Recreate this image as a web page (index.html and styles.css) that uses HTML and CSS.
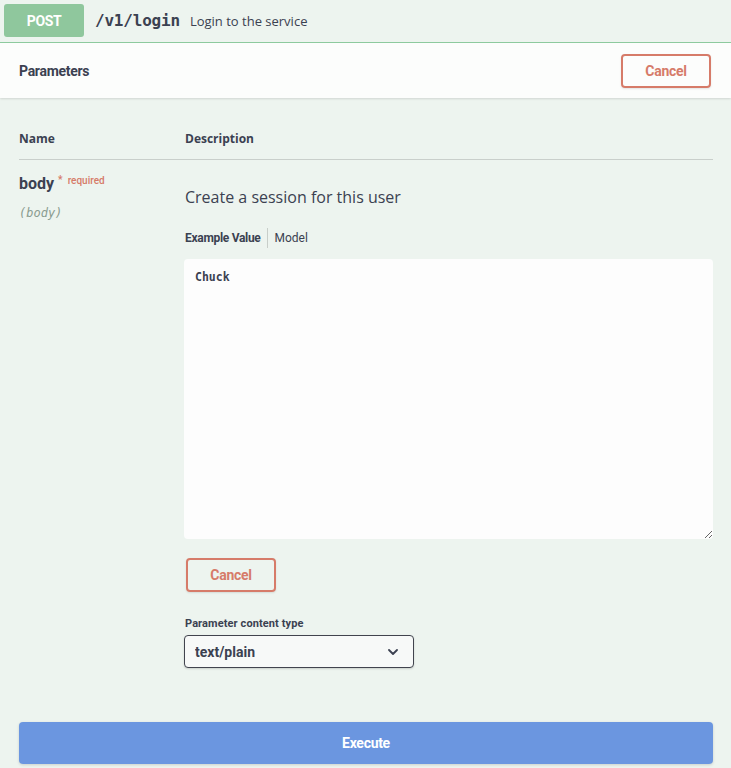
FILE: index.html
```html
<!DOCTYPE html>
<html lang="en">
<head>
<meta charset="utf-8">
<title>POST /v1/login</title>
<link rel="stylesheet" href="styles.css">
</head>
<body>
<div class="opblock">
  <div class="summary">
    <span class="method">POST</span>
    <span class="path">/v1/login</span>
    <span class="summary-desc">Login to the service</span>
  </div>
  <div class="section-header">
    <h4 class="section-title">Parameters</h4>
    <button class="btn cancel">Cancel</button>
  </div>
  <div class="params">
    <div class="params-head">
      <div class="col-name">Name</div>
      <div class="col-desc">Description</div>
    </div>
    <div class="param-row">
      <div class="col-name">
        <div class="pname">body<span class="req-star">*</span><span class="req">required</span></div>
        <div class="pin">(body)</div>
      </div>
      <div class="col-desc">
        <p class="markdown">Create a session for this user</p>
        <ul class="tabs">
          <li class="tab active">Example Value</li>
          <li class="tab">Model</li>
        </ul>
        <textarea class="body-param" spellcheck="false">Chuck</textarea>
        <button class="btn cancel small">Cancel</button>
        <div class="content-type-label">Parameter content type</div>
        <div class="select-wrap">
          <select class="content-type">
            <option>text/plain</option>
          </select>
          <svg class="chevron" width="10" height="6" viewBox="0 0 10 6"><path d="M1 1 L5 5 L9 1" fill="none" stroke="#3b4151" stroke-width="1.8" stroke-linecap="round" stroke-linejoin="round"/></svg>
        </div>
      </div>
    </div>
  </div>
  <div class="execute-wrapper">
    <button class="btn execute">Execute</button>
  </div>
</div>
</body>
</html>
```

FILE: styles.css
```css
* { box-sizing: border-box; }
html, body { margin: 0; padding: 0; }
body {
  background: #edf4ef;
  color: #3b4151;
  font-family: "Open Sans", "Noto Sans", sans-serif;
  width: 731px;
  height: 768px;
  overflow: hidden;
}
.opblock { background: #edf4ef; }

.summary {
  display: flex;
  align-items: center;
  height: 43px;
  padding: 0 4px 1px 4px;
  border-bottom: 1px solid #8fcca0;
}
.method {
  width: 80px;
  height: 33px;
  display: flex;
  align-items: center;
  justify-content: center;
  background: #8fc79d;
  color: #fff;
  border-radius: 3px;
  font-family: Roboto, sans-serif;
  font-weight: 700;
  font-size: 14px;
  letter-spacing: -0.4px;
}
.path {
  margin-left: 11px;
  font-family: "DejaVu Sans Mono", monospace;
  font-weight: 700;
  font-size: 16px;
  letter-spacing: -0.2px;
  color: #3b4151;
}
.summary-desc {
  margin-left: 10px;
  font-size: 13px;
  color: #3b4151;
}

.section-header {
  display: flex;
  align-items: center;
  justify-content: space-between;
  height: 55px;
  padding: 0 20px 0 19px;
  background: #fcfdfc;
  box-shadow: 0 1px 2px rgba(0,0,0,0.12);
}
.section-title {
  margin: 0;
  font-family: Roboto, sans-serif;
  font-weight: 700;
  font-size: 14px;
  letter-spacing: -0.3px;
  color: #3b4151;
}
.btn {
  font-family: Roboto, sans-serif;
  font-weight: 700;
  font-size: 14px;
  letter-spacing: -0.3px;
  border-radius: 4px;
  cursor: pointer;
}
.cancel {
  width: 90px;
  height: 34px;
  background: transparent;
  border: 2px solid #d67b69;
  color: #d67b69;
  box-shadow: 0 1px 2px rgba(0,0,0,0.1);
}

.params {
  padding: 20px 18px 0 19px;
}
.params-head {
  display: grid;
  grid-template-columns: 166px 1fr;
  padding: 13px 0 13px;
  border-bottom: 1px solid #c9cfcb;
  font-size: 12px;
  line-height: 15px;
  font-weight: 700;
}
.param-row {
  display: grid;
  grid-template-columns: 166px 1fr;
  padding-top: 13px;
}
.pname {
  padding-top: 1px;
  font-family: Roboto, sans-serif;
  font-weight: 700;
  font-size: 16px;
  line-height: 20px;
  color: #3b4151;
}
.req-star {
  position: relative;
  top: -6px;
  margin-left: 4px;
  font-size: 10px;
  color: #d67b69;
}
.req {
  position: relative;
  top: -5px;
  margin-left: 5px;
  font-size: 10px;
  font-weight: 500;
  color: #d67b69;
}
.pin {
  margin-top: 8px;
  font-family: "DejaVu Sans Mono", monospace;
  font-style: italic;
  font-size: 12px;
  line-height: 18px;
  color: #8a9c90;
}

.markdown {
  margin: 13px 0 0;
  font-size: 16px;
  line-height: 22px;
  color: #3b4151;
}
.tabs {
  display: flex;
  align-items: center;
  list-style: none;
  margin: 20px 0 0;
  padding: 0;
  height: 20px;
}
.tab {
  font-family: Roboto, sans-serif;
  font-size: 12px;
  line-height: 20px;
  color: #3b4151;
}
.tab.active {
  font-weight: 700;
  letter-spacing: -0.3px;
  padding-right: 6px;
  border-right: 1px solid #c8cec9;
}
.tab + .tab { padding-left: 7px; }

.body-param {
  display: block;
  width: 529px;
  height: 280px;
  margin: 11px 0 0 -1px;
  padding: 10px 11px;
  background: #fdfdfd;
  border: none;
  border-radius: 4px;
  font-family: "DejaVu Sans Mono", monospace;
  font-weight: 700;
  font-size: 11.5px;
  line-height: 16px;
  color: #3b4151;
  outline: none;
  resize: vertical;
}
.cancel.small {
  display: block;
  margin: 19px 0 0 1px;
}
.content-type-label {
  margin-top: 24px;
  font-family: Roboto, sans-serif;
  font-weight: 700;
  font-size: 11px;
  line-height: 15px;
  letter-spacing: 0.1px;
  color: #3b4151;
}
.select-wrap {
  position: relative;
  width: 230px;
  margin: 4px 0 0 -1px;
}
.content-type {
  display: block;
  width: 230px;
  height: 33px;
  padding: 0 30px 0 10px;
  appearance: none;
  -webkit-appearance: none;
  background: #f7f9f8;
  border: 1.5px solid #41444e;
  border-radius: 4px;
  box-shadow: 0 1px 2px rgba(0,0,0,0.15);
  font-family: Roboto, sans-serif;
  font-weight: 700;
  font-size: 14px;
  color: #3b4151;
  outline: none;
}
.chevron {
  position: absolute;
  right: 16px;
  top: 14px;
  pointer-events: none;
}

.execute-wrapper {
  padding: 54px 18px 0 19px;
}
.execute {
  display: block;
  width: 100%;
  height: 42px;
  background: #6b96e0;
  border: none;
  color: #fff;
  box-shadow: 0 1px 3px rgba(0,0,0,0.15);
}
```
